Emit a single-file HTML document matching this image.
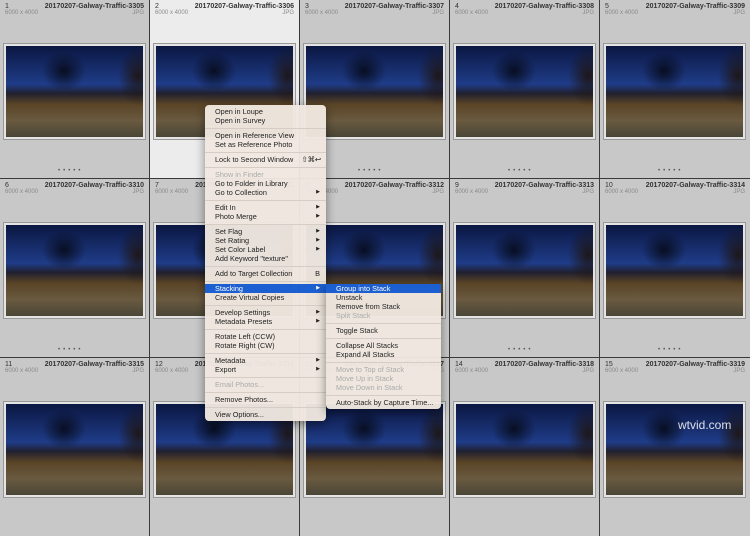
<!DOCTYPE html>
<html><head><meta charset="utf-8"><style>
*{margin:0;padding:0;box-sizing:border-box}
body{width:750px;height:435px;overflow:hidden;background:#3a3a3a;font-family:"Liberation Sans",sans-serif;position:relative}
.c{position:absolute;width:149px;height:178px;background:#c8c8c8;overflow:hidden}
.c.s{background:#ececec}
.n{position:absolute;left:5px;top:3px;font-size:7px;color:#333}
.t{position:absolute;right:5px;top:3px;font-size:7px;color:#333;font-weight:bold}
.d{position:absolute;left:5px;top:10px;font-size:6px;color:#8a8a8a}
.j{position:absolute;right:5px;top:10px;font-size:6px;color:#8a8a8a}
.p{position:absolute;left:4px;top:44px;width:141px;height:95px;border:2px solid #e4e4e4;box-shadow:0 0 0 1px #999;
background:radial-gradient(ellipse 22px 20px at 58px 25px,rgba(5,8,20,.85),rgba(5,8,20,0) 100%),radial-gradient(ellipse 20px 30px at 132px 30px,rgba(30,20,15,.9),rgba(0,0,0,0)),linear-gradient(#0b1742 0%,#1f3c88 42%,#202030 52%,#5a4426 64%,#6a5a40 82%,#4a4636 100%)}
.dots{position:absolute;left:58px;top:168px;font-size:6px;color:#555;letter-spacing:3px}
.m{position:absolute;background:rgba(240,232,224,.96);border-radius:4px;box-shadow:0 3px 10px rgba(0,0,0,.45);font-size:7.3px;color:#222}
.m div{height:9px;line-height:9px;padding-left:10px;position:relative;white-space:nowrap}
.m hr{border:0;border-top:1px solid #d5cdc6;margin:3px 0 2px;height:0}
.m .g{color:#aaa}
.m .a:after{content:"▶";position:absolute;right:6px;font-size:5px}
.m .h{background:#1c5fd0;color:#fff}
</style></head><body>

<div class="c" style="left:0;top:0"><span class="n">1</span><span class="t">20170207-Galway-Traffic-3305</span><span class="d">6000 x 4000</span><span class="j">JPG</span><div class="p"></div><span class="dots">•••••</span></div>
<div class="c s" style="left:150px;top:0"><span class="n">2</span><span class="t">20170207-Galway-Traffic-3306</span><span class="d">6000 x 4000</span><span class="j">JPG</span><div class="p"></div></div>
<div class="c" style="left:300px;top:0"><span class="n">3</span><span class="t">20170207-Galway-Traffic-3307</span><span class="d">6000 x 4000</span><span class="j">JPG</span><div class="p"></div><span class="dots">•••••</span></div>
<div class="c" style="left:450px;top:0"><span class="n">4</span><span class="t">20170207-Galway-Traffic-3308</span><span class="d">6000 x 4000</span><span class="j">JPG</span><div class="p"></div><span class="dots">•••••</span></div>
<div class="c" style="left:600px;top:0;width:150px"><span class="n">5</span><span class="t">20170207-Galway-Traffic-3309</span><span class="d">6000 x 4000</span><span class="j">JPG</span><div class="p"></div><span class="dots">•••••</span></div>

<div class="c" style="left:0;top:179px"><span class="n">6</span><span class="t">20170207-Galway-Traffic-3310</span><span class="d">6000 x 4000</span><span class="j">JPG</span><div class="p"></div><span class="dots">•••••</span></div>
<div class="c" style="left:150px;top:179px"><span class="n">7</span><span class="t">20170207-Galway-Traffic-3311</span><span class="d">6000 x 4000</span><span class="j">JPG</span><div class="p"></div><span class="dots">•••••</span></div>
<div class="c" style="left:300px;top:179px"><span class="n">8</span><span class="t">20170207-Galway-Traffic-3312</span><span class="d">6000 x 4000</span><span class="j">JPG</span><div class="p"></div><span class="dots">•••••</span></div>
<div class="c" style="left:450px;top:179px"><span class="n">9</span><span class="t">20170207-Galway-Traffic-3313</span><span class="d">6000 x 4000</span><span class="j">JPG</span><div class="p"></div><span class="dots">•••••</span></div>
<div class="c" style="left:600px;top:179px;width:150px"><span class="n">10</span><span class="t">20170207-Galway-Traffic-3314</span><span class="d">6000 x 4000</span><span class="j">JPG</span><div class="p"></div><span class="dots">•••••</span></div>

<div class="c" style="left:0;top:358px"><span class="n">11</span><span class="t">20170207-Galway-Traffic-3315</span><span class="d">6000 x 4000</span><span class="j">JPG</span><div class="p"></div></div>
<div class="c" style="left:150px;top:358px"><span class="n">12</span><span class="t">20170207-Galway-Traffic-3316</span><span class="d">6000 x 4000</span><span class="j">JPG</span><div class="p"></div></div>
<div class="c" style="left:300px;top:358px"><span class="n">13</span><span class="t">20170207-Galway-Traffic-3317</span><span class="d">6000 x 4000</span><span class="j">JPG</span><div class="p"></div></div>
<div class="c" style="left:450px;top:358px"><span class="n">14</span><span class="t">20170207-Galway-Traffic-3318</span><span class="d">6000 x 4000</span><span class="j">JPG</span><div class="p"></div></div>
<div class="c" style="left:600px;top:358px;width:150px"><span class="n">15</span><span class="t">20170207-Galway-Traffic-3319</span><span class="d">6000 x 4000</span><span class="j">JPG</span><div class="p"></div></div>

<div class="m" style="left:205px;top:105px;width:121px;padding:2px 0">
<div>Open in Loupe</div><div>Open in Survey</div><hr>
<div>Open in Reference View</div><div>Set as Reference Photo</div><hr>
<div>Lock to Second Window<span style="position:absolute;right:5px">⇧⌘↩</span></div><hr>
<div class="g">Show in Finder</div><div>Go to Folder in Library</div><div class="a">Go to Collection</div><hr>
<div class="a">Edit In</div><div class="a">Photo Merge</div><hr>
<div class="a">Set Flag</div><div class="a">Set Rating</div><div class="a">Set Color Label</div><div>Add Keyword "texture"</div><hr>
<div>Add to Target Collection<span style="position:absolute;right:6px">B</span></div><hr>
<div class="a h">Stacking</div><div>Create Virtual Copies</div><hr>
<div class="a">Develop Settings</div><div class="a">Metadata Presets</div><hr>
<div>Rotate Left (CCW)</div><div>Rotate Right (CW)</div><hr>
<div class="a">Metadata</div><div class="a">Export</div><hr>
<div class="g">Email Photos...</div><hr>
<div>Remove Photos...</div><hr>
<div>View Options...</div>
</div>

<div class="m" style="left:326px;top:284px;width:115px;padding:0 0 2px;border-radius:0 4px 4px 4px">
<div class="h">Group into Stack</div><div>Unstack</div><div>Remove from Stack</div><div class="g">Split Stack</div><hr>
<div>Toggle Stack</div><hr>
<div>Collapse All Stacks</div><div>Expand All Stacks</div><hr>
<div class="g">Move to Top of Stack</div><div class="g">Move Up in Stack</div><div class="g">Move Down in Stack</div><hr>
<div>Auto-Stack by Capture Time...</div>
</div>
<div style="position:absolute;left:678px;top:418px;color:#fff;font-size:12px;opacity:.85">wtvid.com</div>
</body></html>
